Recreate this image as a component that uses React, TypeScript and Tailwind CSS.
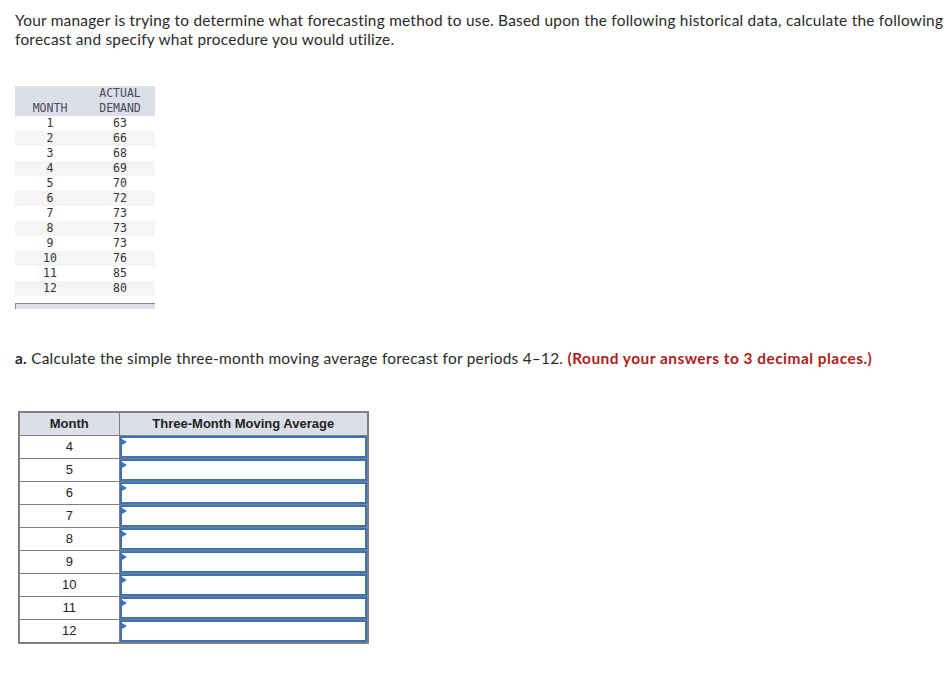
const history = [
  [1, 63], [2, 66], [3, 68], [4, 69], [5, 70], [6, 72],
  [7, 73], [8, 73], [9, 73], [10, 76], [11, 85], [12, 80],
];

const months = [4, 5, 6, 7, 8, 9, 10, 11, 12];

function AnswerCell() {
  return (
    <td className="border border-[#808080] p-0 h-[23px]">
      <div className="relative h-[22px] border-2 border-[#3b73b9] bg-white">
        <span className="absolute left-0 top-[1px] w-0 h-0 border-y-[3px] border-y-transparent border-l-[5px] border-l-[#3b73b9]" />
      </div>
    </td>
  );
}

export default function App() {
  return (
    <div className="min-h-[677px] bg-white text-[#2b2b2b] font-['Lato',sans-serif]">
      <p className="pt-[11px] pl-[15px] text-[15.4px] leading-[19px] tracking-[0.25px] text-[#2a2a2a]">
        Your manager is trying to determine what forecasting method to use. Based upon the following historical data, calculate the following
        forecast and specify what procedure you would utilize.
      </p>

      <div className="mt-[37px] ml-[15px] w-[140px] font-['DejaVu_Sans_Mono',monospace] text-[11.5px] text-[#333]">
        <table className="w-full border-collapse">
          <thead>
            <tr className="bg-[#dcdfe8] text-[#4a4a5a] h-[29px]">
              <th className="w-[70px] p-0 pb-[1px] font-normal align-bottom leading-[14px]">MONTH</th>
              <th className="p-0 font-normal align-bottom leading-[15px]">
                ACTUAL<br />DEMAND
              </th>
            </tr>
          </thead>
          <tbody>
            {history.map(([m, d], i) => (
              <tr key={m} className={i % 2 === 1 ? 'bg-[#f5f5f5]' : 'bg-white'}>
                <td className="p-0 text-center leading-[15px] h-[15px]">{m}</td>
                <td className="p-0 text-center leading-[15px] h-[15px]">{d}</td>
              </tr>
            ))}
          </tbody>
        </table>
        <div className="mt-[7px] h-[6px] bg-[#dcdfe8] border-t border-l border-[#8a8a8a]" />
      </div>

      <p className="mt-[40px] ml-[15px] text-[15.4px] leading-[19px] tracking-[0.25px] text-[#2a2a2a]">
        <span className="font-bold">a.</span> Calculate the simple three-month moving average forecast for periods 4–12.{' '}
        <span className="font-bold tracking-[0.5px] text-[#b01c1c]">(Round your answers to 3 decimal places.)</span>
      </p>

      <table className="mt-[43px] ml-[18px] w-[351px] border-collapse border-2 border-[#808080] font-['Liberation_Sans',Arial,sans-serif] text-[13px] text-[#222]">
        <thead>
          <tr className="bg-[#dcdfe8]">
            <th className="w-[100px] h-[23px] p-0 border border-[#808080] font-bold">Month</th>
            <th className="h-[23px] p-0 border border-[#808080] font-bold">Three-Month Moving Average</th>
          </tr>
        </thead>
        <tbody>
          {months.map((m) => (
            <tr key={m}>
              <td className="border border-[#808080] p-0 text-center h-[23px]">{m}</td>
              <AnswerCell />
            </tr>
          ))}
        </tbody>
      </table>
    </div>
  );
}
